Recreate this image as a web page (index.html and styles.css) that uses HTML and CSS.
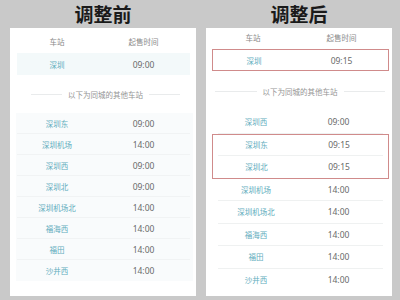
FILE: index.html
```html
<!DOCTYPE html>
<html lang="zh">
<head>
<meta charset="utf-8">
<link rel="stylesheet" href="styles.css">
</head>
<body>
<div class="page">
  <section class="panel">
    <h1 class="title">调整前</h1>
    <div class="card card-before">
      <div class="row head"><span>车站</span><span>起售时间</span></div>
      <div class="row main"><span class="st">深圳</span><span class="tm">09:00</span></div>
      <div class="divider"><span>以下为同城的其他车站</span></div>
      <div class="list">
        <div class="row item"><span class="st">深圳东</span><span class="tm">09:00</span></div>
        <div class="row item"><span class="st">深圳机场</span><span class="tm">14:00</span></div>
        <div class="row item"><span class="st">深圳西</span><span class="tm">09:00</span></div>
        <div class="row item"><span class="st">深圳北</span><span class="tm">09:00</span></div>
        <div class="row item"><span class="st">深圳机场北</span><span class="tm">14:00</span></div>
        <div class="row item"><span class="st">福海西</span><span class="tm">14:00</span></div>
        <div class="row item"><span class="st">福田</span><span class="tm">14:00</span></div>
        <div class="row item"><span class="st">沙井西</span><span class="tm">14:00</span></div>
      </div>
    </div>
  </section>
  <section class="panel">
    <h1 class="title">调整后</h1>
    <div class="card card-after">
      <div class="row head"><span>车站</span><span>起售时间</span></div>
      <div class="row main boxed"><span class="st">深圳</span><span class="tm">09:15</span></div>
      <div class="divider"><span>以下为同城的其他车站</span></div>
      <div class="list">
        <div class="row item"><span class="st">深圳西</span><span class="tm">09:00</span></div>
        <div class="group">
          <div class="row item"><span class="st">深圳东</span><span class="tm">09:15</span></div>
          <div class="row item"><span class="st">深圳北</span><span class="tm">09:15</span></div>
        </div>
        <div class="row item"><span class="st">深圳机场</span><span class="tm">14:00</span></div>
        <div class="row item"><span class="st">深圳机场北</span><span class="tm">14:00</span></div>
        <div class="row item"><span class="st">福海西</span><span class="tm">14:00</span></div>
        <div class="row item"><span class="st">福田</span><span class="tm">14:00</span></div>
        <div class="row item"><span class="st">沙井西</span><span class="tm">14:00</span></div>
      </div>
    </div>
  </section>
</div>
</body>
</html>
```

FILE: styles.css
```css
html, body {
  margin: 0;
  padding: 0;
  background: #c9c9c9;
  width: 400px;
  height: 300px;
  overflow: hidden;
}
body {
  font-family: "Noto Sans", "Noto Sans CJK SC", sans-serif;
}
.page {
  display: flex;
  gap: 10px;
  padding-left: 10px;
}
.panel {
  width: 186px;
  display: flex;
  flex-direction: column;
}
.title {
  margin: 0;
  height: 28px;
  line-height: 28px;
  text-align: center;
  font-family: "Noto Sans CJK SC", sans-serif;
  font-size: 19px;
  font-weight: 700;
  color: #1a1a1a;
}
.card {
  background: #fff;
  height: 268px;
  box-sizing: border-box;
}
.row {
  display: grid;
  align-items: center;
  text-align: center;
  font-size: 7.5px;
}
.head {
  color: #8a8a8a;
  font-family: "Noto Sans CJK SC", sans-serif;
}
.st {
  color: #62adbd;
  font-family: "Noto Sans CJK SC", sans-serif;
}
.tm {
  color: #6a6a6a;
  font-size: 8.5px;
}
.divider {
  display: flex;
  align-items: center;
  gap: 6px;
  font-size: 7.5px;
  color: #959595;
  font-family: "Noto Sans CJK SC", sans-serif;
}
.divider::before, .divider::after {
  content: "";
  flex: 1;
  height: 1px;
  background: #e9ebec;
}

/* before */
.card-before {
  padding: 0 6px 0 7px;
}
.card-before .row {
  grid-template-columns: 80px 1fr;
}
.card-before .head {
  height: 25px;
  padding-top: 2px;
  box-sizing: border-box;
}
.card-before .main {
  height: 22px;
  background: #f3f9fa;
}
.card-before .divider {
  height: 38px;
  padding: 0 10px 0 14px;
}
.card-before .list {
  background: #f9fbfc;
  margin: 0 -3px 0 -1px;
  padding: 0 3px 0 1px;
}
.card-before .item {
  height: 21px;
  border-bottom: 1px solid #f1f3f4;
  box-sizing: border-box;
}
.card-before .item:last-child {
  border-bottom: none;
}

/* after */
.card-after {
  padding: 0 3px 0 6px;
}
.card-after .row {
  grid-template-columns: 82px 1fr;
}
.card-after .head {
  height: 21px;
  padding-bottom: 3px;
  box-sizing: border-box;
}
.card-after .boxed {
  height: 22px;
  border: 1px solid #d08b8b;
  box-sizing: border-box;
}
.card-after .divider {
  height: 40px;
  padding: 0 4px 0 3px;
}
.card-after .item {
  height: 22.5px;
  box-sizing: border-box;
  border-bottom: 1px solid #eff1f1;
  margin: 0 6px;
}
.card-after .item:last-child {
  border-bottom: none;
}
.card-after .group {
  border: 1px solid #d08b8b;
}
.card-after .group .item {
  height: 21.5px;
  margin: 0 5px;
  grid-template-columns: 77px 1fr;
}
.card-after .list > .item {
  grid-template-columns: 76px 1fr;
}
```
